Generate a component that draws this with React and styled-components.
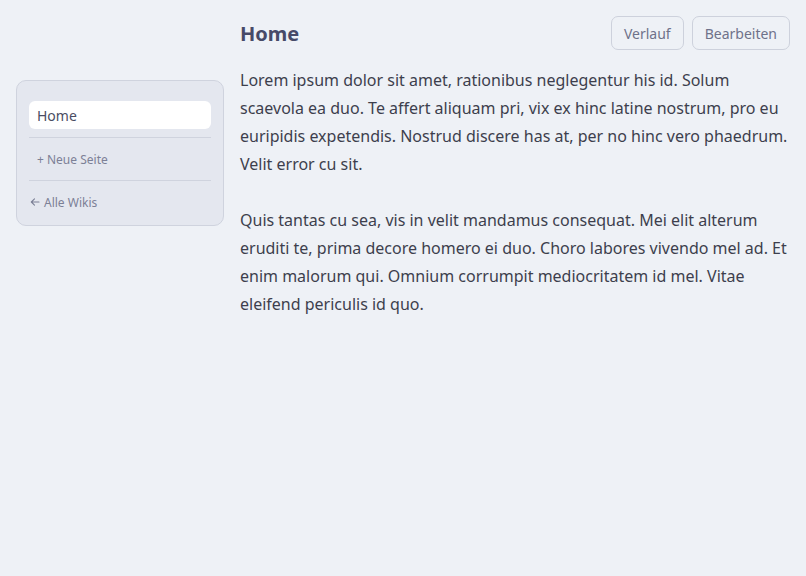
import React from "react";
import styled, { createGlobalStyle } from "styled-components";

const GlobalStyle = createGlobalStyle`
  html, body {
    margin: 0;
    padding: 0;
    background: #eef1f6;
  }
  body {
    font-family: "Noto Sans", "Liberation Sans", sans-serif;
  }
`;

function BackArrow() {
  return (
    <ArrowIcon viewBox="0 0 10 10" width="10" height="10">
      <path
        d="M9 5H1.5M4.5 1.8L1.3 5l3.2 3.2"
        fill="none"
        stroke="currentColor"
        strokeWidth="1.1"
        strokeLinecap="round"
        strokeLinejoin="round"
      />
    </ArrowIcon>
  );
}

export default function App() {
  return (
    <Page>
      <GlobalStyle />
      <Sidebar>
        <Nav>
          <NavItem active>Home</NavItem>
          <Divider />
          <NavLink indent>+ Neue Seite</NavLink>
          <Divider />
          <NavLink>
            <BackArrow />
            Alle Wikis
          </NavLink>
        </Nav>
      </Sidebar>
      <Main>
        <Header>
          <Title>Home</Title>
          <Actions>
            <Button>Verlauf</Button>
            <Button>Bearbeiten</Button>
          </Actions>
        </Header>
        <Paragraph>
          Lorem ipsum dolor sit amet, rationibus neglegentur his id. Solum
          scaevola ea duo. Te affert aliquam pri, vix ex hinc latine nostrum,
          pro eu euripidis expetendis. Nostrud discere has at, per no hinc vero
          phaedrum. Velit error cu sit.
        </Paragraph>
        <Paragraph>
          Quis tantas cu sea, vis in velit mandamus consequat. Mei elit alterum
          eruditi te, prima decore homero ei duo. Choro labores vivendo mel ad.
          Et enim malorum qui. Omnium corrumpit mediocritatem id mel. Vitae
          eleifend periculis id quo.
        </Paragraph>
      </Main>
    </Page>
  );
}

const Page = styled.div`
  display: flex;
  gap: 16px;
  padding: 16px;
  min-height: 576px;
  box-sizing: border-box;
`;

const Sidebar = styled.aside`
  width: 208px;
  flex-shrink: 0;
  padding-top: 64px;
`;

const Nav = styled.nav`
  display: flex;
  flex-direction: column;
  padding: 20px 12px 10px;
  background: #e4e7ef;
  border: 1px solid #cfd3de;
  border-radius: 10px;
`;

const NavItem = styled.div`
  height: 28px;
  display: flex;
  align-items: center;
  padding-left: 8px;
  border-radius: 6px;
  background: ${(p) => (p.active ? "#ffffff" : "transparent")};
  font-size: 14px;
  color: #4a4d63;
`;

const Divider = styled.div`
  height: 1px;
  background: #cfd3de;
  margin: 8px 0;
`;

const NavLink = styled.div`
  height: 26px;
  display: flex;
  align-items: center;
  gap: 4px;
  padding-left: ${(p) => (p.indent ? "8px" : "1px")};
  font-size: 12px;
  color: #7c8096;
`;

const ArrowIcon = styled.svg`
  flex-shrink: 0;
`;

const Main = styled.main`
  flex: 1;
  min-width: 0;
`;

const Header = styled.div`
  display: flex;
  align-items: center;
  justify-content: space-between;
  height: 34px;
  margin-bottom: 16px;
`;

const Title = styled.h1`
  margin: 0;
  font-size: 20px;
  font-weight: 700;
  color: #474a68;
`;

const Actions = styled.div`
  display: flex;
  gap: 8px;
`;

const Button = styled.button`
  height: 34px;
  padding: 0 12px;
  border: 1px solid #cdd1dc;
  border-radius: 7px;
  background: transparent;
  font-family: "Noto Sans", "Liberation Sans", sans-serif;
  font-size: 14px;
  color: #6e728a;
`;

const Paragraph = styled.p`
  margin: 0 0 28px;
  font-size: 16px;
  line-height: 28px;
  color: #3d3f4d;
`;
